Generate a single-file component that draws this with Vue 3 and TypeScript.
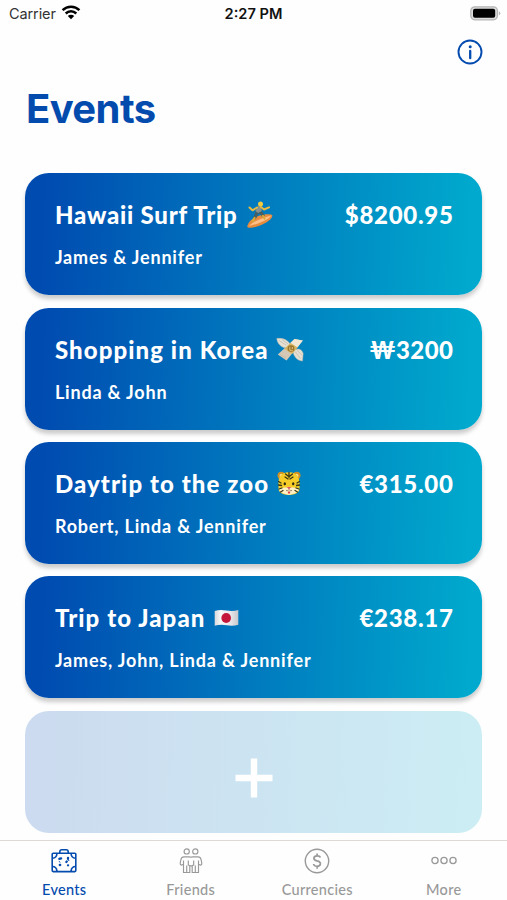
<script setup lang="ts">
type Emoji = 'surfer' | 'money' | 'tiger' | 'japan'
interface TripEvent {
  title: string
  emoji: Emoji
  people: string
  total: string
}
interface Tab {
  id: 'events' | 'friends' | 'currencies' | 'more'
  label: string
}

const events: TripEvent[] = [
  { title: 'Hawaii Surf Trip', emoji: 'surfer', people: 'James & Jennifer', total: '$8200.95' },
  { title: 'Shopping in Korea', emoji: 'money', people: 'Linda & John', total: '₩3200' },
  { title: 'Daytrip to the zoo', emoji: 'tiger', people: 'Robert, Linda & Jennifer', total: '€315.00' },
  { title: 'Trip to Japan', emoji: 'japan', people: 'James, John, Linda & Jennifer', total: '€238.17' },
]
const tabs: Tab[] = [
  { id: 'events', label: 'Events' },
  { id: 'friends', label: 'Friends' },
  { id: 'currencies', label: 'Currencies' },
  { id: 'more', label: 'More' },
]
const activeTab: Tab['id'] = 'events'
</script>

<template>
  <div class="screen">
    <header class="status">
      <div class="carrier">
        <span>Carrier</span>
        <svg class="wifi" width="20" height="15" viewBox="0 0 20 15">
          <g fill="none" stroke="#000" stroke-width="2.5">
            <path d="M1.6 5.2a12 12 0 0 1 16.8 0" />
            <path d="M4.7 8.5a7.6 7.6 0 0 1 10.6 0" />
          </g>
          <path d="M6.8 11a4.6 4.6 0 0 1 6.4 0L10 14.3z" fill="#000" />
        </svg>
      </div>
      <time>2:27 PM</time>
      <svg class="battery" width="31" height="15" viewBox="0 0 31 15">
        <rect x="0.8" y="0.8" width="26.6" height="13" rx="4" fill="#ddd" stroke="#b5b5b5" stroke-width="1.3" />
        <rect x="3" y="2.8" width="22.2" height="9" rx="2" fill="#000" />
        <path d="M28.8 5.2a2.2 2.2 0 0 1 0 4.2z" fill="#bbb" />
      </svg>
    </header>

    <div class="toolbar">
      <button class="info" aria-label="Info">
        <svg width="26" height="26" viewBox="0 0 26 26">
          <circle cx="13" cy="13" r="11.5" fill="none" stroke="#044bae" stroke-width="1.9" />
          <circle cx="13.2" cy="7.7" r="1.5" fill="#044bae" />
          <path d="M13.2 11.9v7.3" stroke="#044bae" stroke-width="2.3" stroke-linecap="round" />
        </svg>
      </button>
    </div>

    <h1>Events</h1>

    <main class="list">
      <article v-for="event in events" :key="event.title" class="card" :class="event.emoji">
        <div class="row">
          <h2>{{ event.title }}</h2>
          <svg v-if="event.emoji === 'surfer'" class="emoji" width="28" height="28" viewBox="0 0 28 28">
            <path d="M1.2 25.6C2.5 20 7 17 13 14.8 19 12.8 25.5 12.8 26.5 14.5 25.5 20 17 23.5 11 25.5 6.5 27 1.5 27.5 1.2 25.6z" fill="#e98b3d" />
            <path d="M3 25C8 19.5 18 16.5 25.5 14.5 21 20 11 23 3 25z" fill="#ffc08a" />
            <path d="M11 10.5 15.500 12 17.500 15.500M11 10.500 9.500 15.500 8 17.500" fill="none" stroke="#465f62" stroke-width="3" stroke-linejoin="round" />
            <path d="M17 15 18.500 17.500M8.500 17 6.800 20" fill="none" stroke="#d9a93b" stroke-width="2.2" stroke-linecap="round" />
            <path d="M11 5.500 14.500 4.800 15.800 10 12 12 9.500 10z" fill="#899291" />
            <path d="M11 6.500 6.500 9.300 3.500 6.500M15 6 18 8.500 23 6.300" fill="none" stroke="#e6bb43" stroke-width="2" stroke-linecap="round" stroke-linejoin="round" />
            <circle cx="14.5" cy="2.9" r="2.5" fill="#f2cb3f" />
          </svg>
          <svg v-else-if="event.emoji === 'money'" class="emoji" width="28" height="26" viewBox="0 0 28 26">
            <g fill="#e5e0d4" stroke="#b5b3a8" stroke-width=".5">
              <path d="M11 11C5 11 1 6 .8 1.500 6 .8 12 2.500 14.500 8z" />
              <path d="M17 15C20 10 26 11.500 27.200 16.500L26.500 24C22 24 18 20 17 15z" />
            </g>
            <path d="M18.500 2 26.800 3.500 10.500 23.500 1.800 17.500z" fill="#d3c8b5" />
            <path d="M18.500 2 26.800 3.500 21.500 10.500 14.500 6z" fill="#f0e8d4" />
            <path d="M14.500 6 21.500 10.500 16 17 8.500 11.800z" fill="#d9b660" />
            <ellipse cx="15" cy="11.500" rx="3.400" ry="3.200" fill="#9c7530" />
            <path d="M13.800 9.800v3.500h3M16.300 10v2" stroke="#e2c37b" fill="none" />
            <path d="M3 3.500 10 8M6 2.500 12 7M19 14.500 24.500 21.500M21 13.500 26 18M4 17.500 10 21" stroke="#c2b8a6" stroke-width=".7" fill="none" />
          </svg>
          <svg v-else-if="event.emoji === 'tiger'" class="emoji" width="24" height="25" viewBox="0 0 24 25">
            <circle cx="4.2" cy="4.5" r="3.7" fill="#cd8f22" />
            <circle cx="19.8" cy="4.5" r="3.7" fill="#cd8f22" />
            <circle cx="4.5" cy="4.7" r="2" fill="#f5df9c" />
            <circle cx="19.5" cy="4.7" r="2" fill="#f5df9c" />
            <path d="M12 1.200C20 1 22.500 6.500 22.500 12.500V18C22 22 18.500 23.500 12 24 5.500 23.500 2 22 1.500 18V12C1.500 6.500 4 1 12 1.200z" fill="#f5cc28" />
            <path d="M2 17.500 7.500 16.500 12 16.500 16.500 16.500 22 17.500 21 20.500 17.500 22.500 12 24 6.500 22.500 3 20.500z" fill="#fff0c6" />
            <path d="M12 1.500v5M8.500 3 11 5M15.500 3 13 5M8 6 11 8M16 6 13 8M1.500 10.500 4 12M1.500 14 4.500 14.500M2 18 5 17M3.500 21 6 19.500M22.500 10.500 20 12M22.500 14 19.500 14.500M22 18 19 17M20.500 21 18 19.500" stroke="#36351a" stroke-width="1.3" stroke-linecap="round" />
            <ellipse cx="7.8" cy="12.7" rx="1.2" ry="1.5" fill="#2b2712" />
            <ellipse cx="16.2" cy="12.7" rx="1.2" ry="1.5" fill="#2b2712" />
            <path d="M9.800 16h4.400L12 18.400z" fill="#dd5a64" />
            <path d="M9 19.500Q11 20.500 12 18.500 13 20.500 15 19.500" fill="none" stroke="#806546" stroke-width=".8" />
            <path d="M10.900 20.500h2.200v2h-2.200z" fill="#e23e48" />
          </svg>
          <svg v-else class="emoji" width="25" height="18" viewBox="0 0 25 18">
            <defs>
              <linearGradient id="flag-cloth">
                <stop offset="0" stop-color="#d8d8dd" />
                <stop offset=".25" stop-color="#f7f7f7" />
                <stop offset=".65" stop-color="#e8e8ed" />
                <stop offset="1" stop-color="#c8c8cc" />
              </linearGradient>
            </defs>
            <path d="M.7 2Q6 .3 12.500 1.600 19 2.700 24.300 1V15.700Q19 17.400 12.500 16.200 6 15 .7 16.800z" fill="url(#flag-cloth)" />
            <ellipse cx="12.2" cy="9" rx="4.8" ry="5" fill="#c5173c" />
          </svg>
          <strong>{{ event.total }}</strong>
        </div>
        <p>{{ event.people }}</p>
      </article>
      <button class="card add" aria-label="Add event">
        <svg width="38" height="40" viewBox="0 0 38 40">
          <path d="M19 0.500V39.500M0.500 20H37.500" stroke="#fff" stroke-width="6.4" />
        </svg>
      </button>
    </main>

    <nav class="tabs">
      <a v-for="tab in tabs" :key="tab.id" :class="{ active: tab.id === activeTab }">
        <svg v-if="tab.id === 'events'" width="26" height="26" viewBox="0 0 26 26" fill="none" stroke="currentColor" stroke-width="1.6">
          <rect x="1.2" y="5.3" width="23.6" height="18.3" rx="1" />
          <path d="M8.800 5.300V3.800Q8.800 1.700 10.800 1.700H15.200Q17.200 1.700 17.200 3.800V5.300M1.500 10.200Q5.500 10.200 6 5.500M24.500 10.200Q20.500 10.200 20 5.500M1.500 18.500Q5.500 18.500 6 23.300M24.500 18.500Q20.500 18.500 20 23.300" />
          <path d="M8.300 10.800l1.800-.5M8.800 17h.4M17 9.800v1M15.800 13.500l-.5.500M17 17.300h.1" stroke-width="2.3" stroke-linecap="round" />
          <path d="M7.800 13.300l1.500 1M17 11l1 2" stroke-width="1" />
        </svg>
        <svg v-else-if="tab.id === 'friends'" width="26" height="26" viewBox="0 0 26 26" fill="none" stroke="currentColor" stroke-width="1.15">
          <circle cx="8.7" cy="3.4" r="2.6" />
          <circle cx="17.3" cy="3.4" r="2.6" />
          <path d="M13 9.500Q12.500 8.800 11.500 8.800H6Q3.500 8.800 3 11.300L2.200 15Q2 17 3.500 17.200L5.500 16V24.500H11.800V18M13 9.500Q13.500 8.800 14.500 8.800H20Q22.500 8.800 23 11.300L23.800 15Q24 17 22.500 17.200L20.500 16V24.500H14.200V18M5.500 16V12.500M20.500 16V12.500M8.700 24V17.500M17.300 24V17.500M10.300 12.500V17L13 18 15.700 17V12.500" />
        </svg>
        <svg v-else-if="tab.id === 'currencies'" width="26" height="26" viewBox="0 0 26 26" fill="none" stroke="currentColor" stroke-width="1.4">
          <circle cx="13" cy="13" r="11.7" />
          <path d="M16.300 9.600Q15.800 7.800 13.200 7.800 10 7.800 9.900 10.200 9.900 12.100 13 12.800 16.500 13.500 16.400 15.900 16.100 18.300 13.100 18.300 9.900 18.300 9.600 16M13.100 5.500V7.800M13.100 18.300V20.700" stroke-width="1.7" />
        </svg>
        <svg v-else width="26" height="26" viewBox="0 0 26 26" fill="none" stroke="currentColor" stroke-width="1.3">
          <circle cx="4" cy="12.5" r="3.1" />
          <circle cx="13" cy="12.5" r="3.1" />
          <circle cx="22" cy="12.5" r="3.1" />
        </svg>
        <span>{{ tab.label }}</span>
      </a>
    </nav>
  </div>
</template>

<style>
body { margin: 0; background: #fff; }
</style>

<style scoped>
* { box-sizing: border-box; }
.screen { width: 507px; height: 900px; overflow: hidden; background: #fefefe; display: flex; flex-direction: column; font-family: Lato, "Liberation Sans", sans-serif; }
svg { display: block; flex: none; }
button { border: 0; padding: 0; background: none; }
.status { height: 28px; flex: none; display: grid; grid-template-columns: 1fr auto 1fr; align-items: center; padding: 0 6px 0 9px; font: 14.5px/28px Inter, sans-serif; color: #111; }
.carrier { display: flex; align-items: center; gap: 5px; color: #333; letter-spacing: -0.1px; }
.wifi { margin-top: -3px; }
.status time { font-weight: 600; font-size: 14.6px; margin-left: -3px; }
.battery { justify-self: end; margin-top: -1px; }
.toolbar { height: 52px; flex: none; padding: 11px 24px 0 0; display: flex; justify-content: flex-end; align-items: flex-start; }
h1 { margin: 0; height: 93px; flex: none; padding-left: 26px; font: 700 40px/58px Inter, sans-serif; letter-spacing: -0.6px; color: #044bae; }
.list { height: 667px; flex: none; display: flex; flex-direction: column; gap: 12.4px; padding: 0.2px 25.4px 0; }
.card { --title-spacing: 1.08px; --total-spacing: 0.7px; width: 457px; height: 122px; flex: none; border-radius: 24px; padding: 25px 29.5px 0; color: #fff; background: linear-gradient(92deg, #004bb0 4%, #00a9cd 97%); box-shadow: 0 4px 4px rgba(0, 0, 0, 0.2); }
.surfer { --title-spacing: 0.78px; }
.money { --total-spacing: 0.4px; }
.row { display: flex; align-items: center; height: 34px; }
h2 { margin: 0; font: 900 24px/34px Lato, sans-serif; letter-spacing: var(--title-spacing); white-space: nowrap; }
.emoji { margin-left: 8.5px; }
.money .emoji { margin-left: 7px; }
.tiger .emoji { margin-left: 8px; }
.row strong { margin: 0 calc(-1 * var(--total-spacing)) 0 auto; font: 900 24px/34px Lato, sans-serif; letter-spacing: var(--total-spacing); white-space: nowrap; }
.card p { margin: 10px 0 0; font: 700 18px/30px Lato, sans-serif; letter-spacing: 0.81px; white-space: nowrap; }
.add { display: flex; justify-content: center; align-items: center; padding: 12px 0 0; box-shadow: none; background: linear-gradient(92deg, #ccdbef 4%, #ccedf4 97%); }
.tabs { height: 60px; flex: none; display: grid; grid-template-columns: repeat(4, 1fr); padding-left: 1px; border-top: 1px solid #ded9d7; background: #fefefe; }
.tabs a { display: flex; flex-direction: column; align-items: center; padding-top: 7px; color: #999; font-size: 14.5px; font-weight: 500; line-height: 20px; }
.tabs a span { margin-top: 6px; letter-spacing: 0.3px; }
.tabs a.active { color: #044bae; }
</style>
